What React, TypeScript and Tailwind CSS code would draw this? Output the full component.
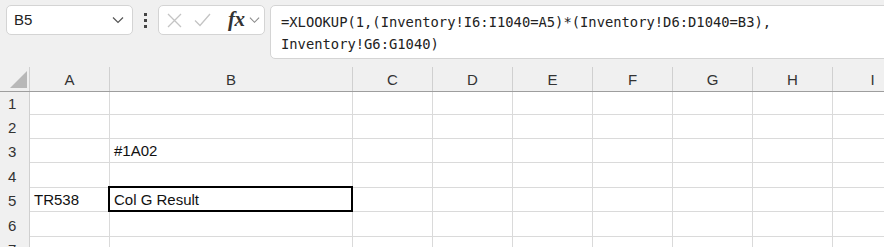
import React from "react"

const cols = [
  { name: "A", w: 80 },
  { name: "B", w: 243 },
  { name: "C", w: 80 },
  { name: "D", w: 80 },
  { name: "E", w: 80 },
  { name: "F", w: 80 },
  { name: "G", w: 80 },
  { name: "H", w: 80 },
  { name: "I", w: 80 },
]

const rows = [
  { n: 1, h: 23 },
  { n: 2, h: 24 },
  { n: 3, h: 24 },
  { n: 4, h: 25 },
  { n: 5, h: 24 },
  { n: 6, h: 25 },
  { n: 7, h: 24 },
]

const cells: Record<string, string> = {
  B3: "#1A02",
  A5: "TR538",
  B5: "Col G Result",
}

function Chevron({ className }: { className?: string }) {
  return (
    <svg width="12" height="8" viewBox="0 0 12 8" className={className}>
      <path d="M1 1.5 L6 6.5 L11 1.5" fill="none" stroke="currentColor" strokeWidth="1.2" />
    </svg>
  )
}

export default function App() {
  return (
    <div className="w-[884px] h-[247px] overflow-hidden bg-[#f0f0f0] text-[#1f1f1f] font-['Liberation_Sans',sans-serif]">
      {/* Formula bar */}
      <div className="flex items-start h-[67px] pt-[5px] pl-[6px]">
        <div className="w-[127px] h-[30px] bg-white border border-[#d4d4d4] rounded-[5px] flex items-center justify-between pl-[7px] pr-[8px]">
          <span className="text-[15px] text-[#222]">B5</span>
          <Chevron className="text-[#555]" />
        </div>
        <div className="w-[25px] h-[30px] flex flex-col items-center justify-center gap-[3px]">
          <span className="w-[3px] h-[3px] bg-[#444]" />
          <span className="w-[3px] h-[3px] bg-[#444]" />
          <span className="w-[3px] h-[3px] bg-[#444]" />
        </div>
        <div className="w-[107px] h-[30px] bg-white border border-[#d4d4d4] rounded-[5px] flex items-center pl-[8px]">
          <svg width="15" height="15" viewBox="0 0 15 15" className="text-[#c4c4c4]">
            <path d="M1 1 L14 14 M14 1 L1 14" stroke="currentColor" strokeWidth="1.3" fill="none" />
          </svg>
          <svg width="17" height="14" viewBox="0 0 17 14" className="ml-[12px] text-[#c4c4c4]">
            <path d="M1 7.5 L6 12.5 L16 1" stroke="currentColor" strokeWidth="1.3" fill="none" />
          </svg>
          <span className="ml-[17px] text-[21px] italic font-semibold leading-none text-[#333] font-['Liberation_Serif',serif] tracking-[-0.5px] -mt-[2px]">
            fx
          </span>
          <Chevron className="ml-[4px] text-[#8a8a8a] w-[11px]" />
        </div>
        <div className="ml-[5px] flex-1 -mr-[20px] h-[54px] bg-white border border-[#d4d4d4] rounded-[5px] pl-[10px] pt-[5px] font-['DejaVu_Sans_Mono',monospace] text-[13.8px] leading-[22px] text-[#222] whitespace-pre">
          <div>=XLOOKUP(1,(Inventory!I6:I1040=A5)*(Inventory!D6:D1040=B3),</div>
          <div>Inventory!G6:G1040)</div>
        </div>
      </div>

      {/* Column headers */}
      <div className="flex h-[25px] border-b border-[#9e9e9e]">
        <div className="relative w-[30px] shrink-0 border-r border-[#d0d0d0]">
          <svg width="17" height="17" viewBox="0 0 17 17" className="absolute left-[10px] top-[4px]">
            <path d="M17 0 L17 17 L0 17 Z" fill="#b8b8b8" />
          </svg>
        </div>
        {cols.map((c) => (
          <div
            key={c.name}
            style={{ width: c.w }}
            className="shrink-0 border-r border-[#d0d0d0] flex items-center justify-center text-[15px] text-[#333] pt-[2px]"
          >
            {c.name}
          </div>
        ))}
      </div>

      {/* Rows */}
      <div className="bg-white">
        {rows.map((r) => (
          <div key={r.n} style={{ height: r.h }} className="flex border-b border-[#dadada]">
            <div className="w-[30px] shrink-0 bg-[#f0f0f0] border-r border-[#d0d0d0] flex items-end -mb-[1px] pl-[8px] text-[15px] text-[#333]">
              {r.n}
            </div>
            {cols.map((c) => {
              const key = `${c.name}${r.n}`
              const selected = key === "B5"
              return (
                <div
                  key={key}
                  style={{ width: c.w }}
                  className={
                    selected
                      ? "relative shrink-0 border-r border-[#dadada] flex items-end pl-[4px] text-[15px] text-[#111]"
                      : "shrink-0 border-r border-[#dadada] flex items-end pl-[4px] text-[15px] text-[#111]"
                  }
                >
                  {selected && (
                    <div className="absolute -left-[2px] -top-[2px] -right-[1px] -bottom-[1px] border-2 border-black" />
                  )}
                  <span className="relative">{cells[key]}</span>
                </div>
              )
            })}
          </div>
        ))}
      </div>
    </div>
  )
}
